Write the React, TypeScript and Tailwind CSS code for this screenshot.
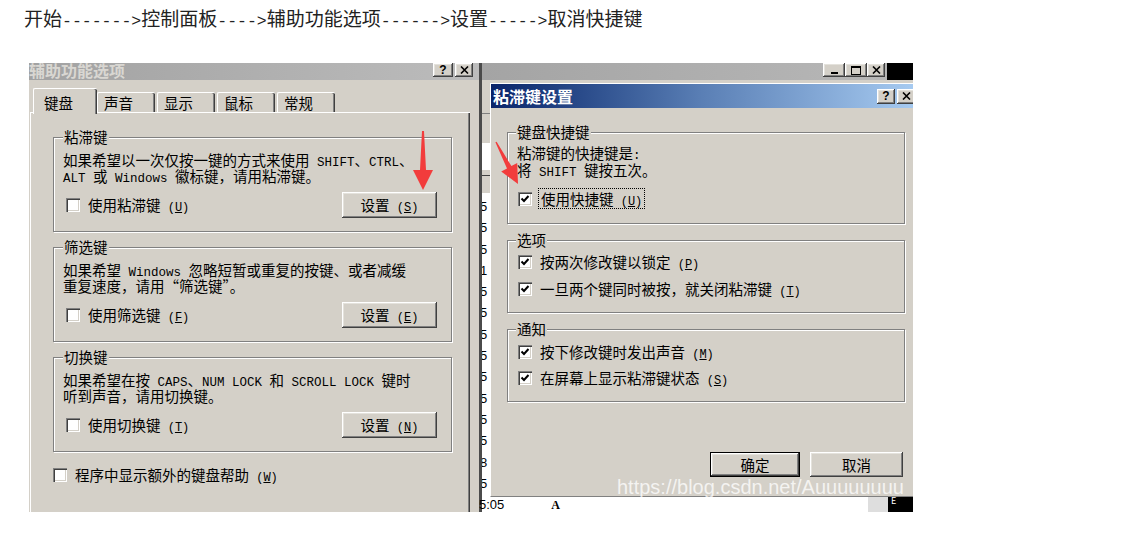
import React from "react";

const raised =
  "bg-[#d4d0c8] shadow-[inset_-1px_-1px_0_#404040,inset_1px_1px_0_#ffffff,inset_-2px_-2px_0_#808080,inset_2px_2px_0_#e4e2dc]";
const mono = "font-['Liberation_Mono',monospace] text-[12.5px] leading-[0]";

// ascii runs get the half-width mono look of the old bitmap font
const Mixed = ({ s }: { s: string }) => (
  <>
    {s.split(/([\x20-\x7e]+)/).map((p, i) =>
      /^[\x20-\x7e]+$/.test(p) ? (
        <span key={i} className={mono}>
          {p}
        </span>
      ) : (
        <React.Fragment key={i}>{p}</React.Fragment>
      )
    )}
  </>
);

const Mn = ({ text, k }: { text: string; k: string }) => (
  <span>
    {text}
    <span className="font-['Liberation_Mono',monospace] text-[12px] leading-[0]">
      {" ("}
      <u className="underline-offset-1">{k}</u>
      {")"}
    </span>
  </span>
);

const Check = ({ on }: { on?: boolean }) => (
  <span className="w-[14px] h-[14px] shrink-0 bg-white flex items-center justify-center shadow-[inset_1px_1px_0_#808080,inset_2px_2px_0_#404040,inset_-1px_-1px_0_#ffffff,inset_-2px_-2px_0_#d4d0c8]">
    {on && (
      <svg width="10" height="10" viewBox="0 0 10 10">
        <path d="M1.5 4.5 L4 7 L8.5 2" stroke="#000" strokeWidth="2" fill="none" />
      </svg>
    )}
  </span>
);

const Group = ({
  title,
  className,
  children,
}: {
  title: string;
  className: string;
  children: React.ReactNode;
}) => (
  <fieldset
    className={
      "border border-[#808080] shadow-[1px_1px_0_#ffffff,inset_1px_1px_0_#ffffff] " +
      className
    }
  >
    <legend className="px-[1px] bg-[#d4d0c8] leading-[16px] relative">{title}</legend>
    {children}
  </fieldset>
);

const CloseGlyph = () => (
  <svg width="9" height="8" viewBox="0 0 9 8">
    <path d="M1 0.5 L8 7.5 M8 0.5 L1 7.5" stroke="#000" strokeWidth="1.6" />
  </svg>
);

const stickyGroups = [
  {
    title: "粘滞键",
    lines: ["如果希望以一次仅按一键的方式来使用 SHIFT、CTRL、", "ALT 或 Windows 徽标键，请用粘滞键。"],
    check: "使用粘滞键",
    checkKey: "U",
    btnKey: "S",
  },
  {
    title: "筛选键",
    lines: ["如果希望 Windows 忽略短暂或重复的按键、或者减缓", "重复速度，请用“筛选键”。"],
    check: "使用筛选键",
    checkKey: "F",
    btnKey: "E",
  },
  {
    title: "切换键",
    lines: ["如果希望在按 CAPS、NUM LOCK 和 SCROLL LOCK 键时", "听到声音，请用切换键。"],
    check: "使用切换键",
    checkKey: "T",
    btnKey: "N",
  },
];

const tabs = ["声音", "显示", "鼠标", "常规"];
const digits = ["5", "5", "5", "1", "5", "5", "5", "5", "5", "5", "5", "5", "8", "5"];

const AccessibilityWindow = () => (
  <div className="w-[453px] shrink-0 flex flex-col bg-[#d4d0c8] border-r-[3px] border-[#4b4b4b] text-[14.5px] text-black">
    <div className="h-[17px] flex items-start overflow-hidden bg-linear-to-r from-[#a2a2a2] to-[#bcbcbc]">
      <span className="-mt-[3px] text-[16px] leading-[20px] font-bold text-[#d9d7d2]">辅助功能选项</span>
      <div className="ml-auto flex gap-[2px] pr-[6px]">
        <div className={"w-[20px] h-[14px] flex items-center justify-center text-[12px] font-bold leading-none font-['Liberation_Sans',sans-serif] " + raised}>
          ?
        </div>
        <div className={"w-[18px] h-[14px] flex items-center justify-center " + raised}>
          <CloseGlyph />
        </div>
      </div>
    </div>
    <div className="h-[32px] pl-[4px] flex items-end">
      <div className="relative z-10 w-[64px] h-[26px] -mb-[2px] pl-[10px] pt-[3px] bg-[#d4d0c8] border-t border-l border-white rounded-t-[2px] shadow-[inset_-1px_0_0_#404040,inset_-2px_0_0_#808080]">
        键盘
      </div>
      {tabs.map((t, i) => (
        <div
          key={t}
          className={
            "w-[58px] h-[20px] pl-[6px] leading-[20px] border-t border-l border-white rounded-t-[2px] shadow-[inset_-1px_0_0_#404040,inset_-2px_0_0_#808080] " +
            (i === 0 ? "" : "ml-[2px]")
          }
        >
          {t}
        </div>
      ))}
    </div>
    <div className="ml-[1px] w-[440px] flex-1 pl-[22px] pt-[16px] border-t border-l border-white shadow-[inset_-1px_0_0_#404040,inset_-2px_0_0_#808080]">
      {stickyGroups.map((g, i) => (
        <Group key={g.title} title={g.title} className={"w-[399px] pl-[9px] pr-[14px] pb-[13px] " + (i === 0 ? "" : "mt-[7px]")}>
          <p className="mt-[7px] leading-[16px]">
            <Mixed s={g.lines[0]} />
            <br />
            <Mixed s={g.lines[1]} />
          </p>
          <div className="mt-[8px] h-[26px] pl-[3px] flex items-center">
            <Check />
            <span className="ml-[8px]">
              <Mn text={g.check} k={g.checkKey} />
            </span>
            <div className={"ml-auto w-[95px] h-[26px] flex items-center justify-center " + raised}>
              <Mn text="设置" k={g.btnKey} />
            </div>
          </div>
        </Group>
      ))}
      <div className="mt-[12px] flex items-center">
        <Check />
        <span className="ml-[8px]">
          <Mn text="程序中显示额外的键盘帮助" k="W" />
        </span>
      </div>
    </div>
  </div>
);

const StickyDialog = () => (
  <div className="flex-1 flex flex-col bg-[#d4d0c8] border-l border-t border-white border-b border-b-[#808080] overflow-hidden text-[14.5px] text-black">
    <div className="h-[24px] shrink-0 flex items-center bg-linear-to-r from-[#0a246a] via-[#5a7fb5] to-[#a6caf0]">
      <span className="pl-[2px] text-[16px] font-bold text-white leading-none">粘滞键设置</span>
      <div className="ml-auto flex gap-[2px] w-[36px]">
        <div className={"w-[18px] h-[15px] shrink-0 flex items-center justify-center text-[12px] font-bold leading-none font-['Liberation_Sans',sans-serif] " + raised}>
          ?
        </div>
        <div className={"w-[18px] h-[15px] shrink-0 flex items-center justify-center " + raised}>
          <CloseGlyph />
        </div>
      </div>
    </div>
    <div className="pl-[16px] pt-[16px] flex flex-col">
      <Group title="键盘快捷键" className="w-[398px] pl-[8px] pb-[14px]">
        <p className="mt-[4px] pl-[1px] leading-[17px]">
          <Mixed s="粘滞键的快捷键是:" />
          <br />
          <Mixed s="将 SHIFT 键按五次。" />
        </p>
        <div className="mt-[10px] h-[21px] pl-[2px] flex items-center">
          <Check on />
          <span className="ml-[6px] h-[21px] px-[2px] flex items-center border border-dotted border-black">
            <Mn text="使用快捷键" k="U" />
          </span>
        </div>
      </Group>
      <Group title="选项" className="mt-[8px] w-[398px] pl-[8px] pb-[13px]">
        <div className="mt-[4px] h-[20px] pl-[2px] flex items-center">
          <Check on />
          <span className="ml-[8px]">
            <Mn text="按两次修改键以锁定" k="P" />
          </span>
        </div>
        <div className="mt-[7px] h-[20px] pl-[2px] flex items-center">
          <Check on />
          <span className="ml-[8px]">
            <Mn text="一旦两个键同时被按，就关闭粘滞键" k="T" />
          </span>
        </div>
      </Group>
      <Group title="通知" className="mt-[8px] w-[398px] pl-[8px] pb-[13px]">
        <div className="mt-[5px] h-[20px] pl-[2px] flex items-center">
          <Check on />
          <span className="ml-[8px]">
            <Mn text="按下修改键时发出声音" k="M" />
          </span>
        </div>
        <div className="mt-[6px] h-[20px] pl-[2px] flex items-center">
          <Check on />
          <span className="ml-[8px]">
            <Mn text="在屏幕上显示粘滞键状态" k="S" />
          </span>
        </div>
      </Group>
      <div className="mt-[50px] w-[398px] pr-[2px] flex justify-end gap-[10px]">
        <div className={"w-[90px] h-[25px] flex items-center justify-center border border-black " + raised}>确定</div>
        <div className={"w-[93px] h-[25px] flex items-center justify-center " + raised}>取消</div>
      </div>
    </div>
  </div>
);

const BackgroundWindow = () => (
  <div className="flex-1 flex flex-col">
    <div className="h-[17px] shrink-0 flex bg-linear-to-r from-[#a4a4a4] to-[#b8b8b8]">
      <div className="ml-auto flex">
        <div className={"w-[22px] h-[14px] flex items-end justify-center pb-[3px] " + raised}>
          <span className="w-[7px] h-[2px] bg-black" />
        </div>
        <div className={"w-[22px] h-[14px] flex items-center justify-center " + raised}>
          <span className="w-[10px] h-[9px] border border-black border-t-2" />
        </div>
        <div className={"w-[18px] h-[14px] flex items-center justify-center " + raised}>
          <CloseGlyph />
        </div>
      </div>
      <div className="ml-[2px] w-[26px] h-[17px] bg-black" />
    </div>
    <div className="flex-1 flex bg-[#d4d0c8]">
      <div className="w-[8px] shrink-0 flex flex-col overflow-hidden">
        <div className="h-[34px] border-b border-[#808080]" />
        <div className="h-[29px]" />
        <div className="h-[27px] bg-white" />
        <div className="h-[6px] border-b border-[#404040]" />
        <div className="h-[17px]" />
        <div className="flex-1 bg-white pt-[3px] font-['Liberation_Sans',sans-serif] text-[13px] leading-[21.3px]">
          {digits.map((d, i) => (
            <div key={i} className="-ml-[2px]">
              {d}
            </div>
          ))}
        </div>
      </div>
      <div className="flex-1 flex flex-col pt-[3px]">
        <StickyDialog />
      </div>
    </div>
    <div className="h-[15px] shrink-0 flex items-center bg-white text-[13px] leading-none">
      <span className="-ml-[3px] font-['Liberation_Sans',sans-serif]">5:05</span>
      <span className="ml-[47px] font-['Liberation_Serif',serif] font-bold text-[12px]">A</span>
      <div className="ml-auto w-[20px] h-[15px] bg-[#dedede]" />
      <div className="w-[25px] h-[15px] bg-black text-white text-[9px] leading-[8px] pl-[3px]">E</div>
    </div>
  </div>
);

const App = () => {
  return (
    <div className="relative w-[1145px] h-[542px] bg-white overflow-hidden font-['Noto_Sans_CJK_SC',sans-serif]">
      <p className="h-[63px] pl-[24px] pt-[6px] text-[19px] leading-[24px] text-[#222]">
        {"开始------->控制面板---->辅助功能选项------>设置----->取消快捷键"
          .split(/([\x20-\x7e]+)/)
          .map((p, i) =>
            /^[\x20-\x7e]+$/.test(p) ? (
              <span key={i} className="font-['Liberation_Mono',monospace] text-[16.5px] leading-[0]">
                {p}
              </span>
            ) : (
              <React.Fragment key={i}>{p}</React.Fragment>
            )
          )}
      </p>
      <div className="ml-[29px] w-[884px] h-[449px] flex overflow-hidden">
        <AccessibilityWindow />
        <BackgroundWindow />
      </div>

      {/* annotation arrows drawn over the screenshot */}
      <svg className="absolute left-0 top-0 pointer-events-none" width="1145" height="542">
        <polygon points="422,131 424,131 426,170 433,170 423,190 413,170 420,170" fill="#f23c3c" />
        <polygon
          points="495.4,142.3 507,168.4 501.2,171.4 518,184 517.2,163 511.4,166 496.6,141.7"
          fill="#f23c3c"
        />
      </svg>
      <div className="absolute left-[617px] top-[477px] font-['Liberation_Sans',sans-serif] text-[20px] leading-[20px] text-white/75 pointer-events-none">
        https://blog.csdn.net/Auuuuuuuu
      </div>
    </div>
  );
};

export default App;
